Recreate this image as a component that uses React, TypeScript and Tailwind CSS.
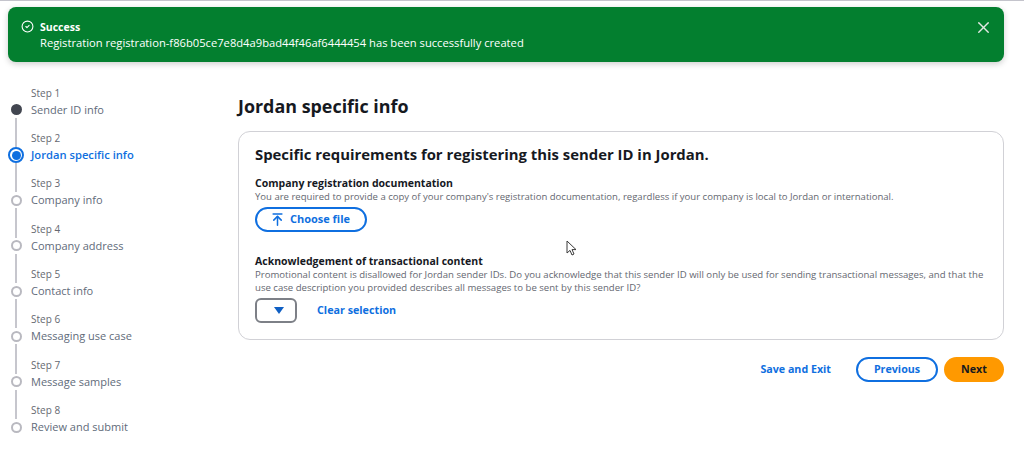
import { ArrowUpToLine, CheckCircle2, X } from "lucide-react";

const steps = [
  "Sender ID info",
  "Jordan specific info",
  "Company info",
  "Company address",
  "Contact info",
  "Messaging use case",
  "Message samples",
  "Review and submit",
];

function StepDot({ index }: { index: number }) {
  if (index === 0) {
    return <span className="h-[11px] w-[11px] rounded-full bg-[#424650]" />;
  }
  if (index === 1) {
    return (
      <span className="flex h-4 w-4 items-center justify-center rounded-full border-2 border-[#0f6fe0] bg-white">
        <span className="h-[9px] w-[9px] rounded-full bg-[#0f6fe0]" />
      </span>
    );
  }
  return <span className="h-[11px] w-[11px] rounded-full border-2 border-[#b9b9c0] bg-white" />;
}

function Wizard() {
  return (
    <nav className="w-[230px] shrink-0 pt-[10.5px]">
      {steps.map((title, i) => (
        <div key={title} className="grid grid-cols-[16px_1fr] gap-x-[7px]">
          <div className="flex h-[29.33px] justify-center">
            {i > 0 && <span className="w-[1.5px] bg-[#c6c6cd]" />}
          </div>
          <div className="flex h-[29.33px] items-end pb-[4px] text-[10px] leading-none text-[#656871]">
            Step {i + 1}
          </div>
          <div className="flex h-4 items-center justify-center">
            <StepDot index={i} />
          </div>
          <div
            className={
              i === 1
                ? "flex h-4 items-center text-[11.2px] font-semibold text-[#0f6fe0]"
                : "flex h-4 items-center text-[11px] text-[#5f6b7a]"
            }
          >
            {title}
          </div>
        </div>
      ))}
    </nav>
  );
}

export default function App() {
  return (
    <div className="relative h-[473px] w-[1024px] overflow-hidden bg-white font-['Open_Sans',sans-serif] text-[#16191f]">
      <div className="h-px bg-[#c4c4cc]" />
      <div className="px-[8px] pr-[20px] pt-[6px]">
        {/* Flash banner */}
        <div className="flex h-[55px] items-start rounded-[8px] bg-[#037f2f] pl-[13px] pr-[11px] pt-[13px] text-white shadow-[0_2px_6px_rgba(0,0,0,0.2)]">
          <CheckCircle2 className="mr-[6px] h-[13px] w-[13px]" strokeWidth={2} />
          <div className="flex-1">
            <div className="text-[10.5px] font-bold leading-[15px]">Success</div>
            <div className="text-[11.2px] leading-[16px]">
              Registration registration-f86b05ce7e8d4a9bad44f46af6444454 has been successfully created
            </div>
          </div>
          <X className="-mt-[2px] h-[19px] w-[19px] text-[#e4e8e4]" strokeWidth={1.7} />
        </div>

        <div className="flex">
          <Wizard />

          <main className="flex-1 pt-[32px]">
            <h1 className="text-[17.9px] font-bold leading-[24px]">Jordan specific info</h1>

            <section className="mt-[13px] h-[209px] rounded-[12px] border border-[#d1d1d6] px-[16px] pt-[11px]">
              <h2 className="text-[14.87px] font-bold leading-[22px]">
                Specific requirements for registering this sender ID in Jordan.
              </h2>

              <div className="mt-[11px] text-[10.5px] font-bold leading-[14px]">Company registration documentation</div>
              <p className="text-[9.55px] leading-[14px] text-[#656871]">
                You are required to provide a copy of your company's registration documentation, regardless if your company is local to Jordan or international.
              </p>
              <button className="mt-[3px] flex h-[25px] w-[112px] items-center justify-center gap-[5px] rounded-full border-2 border-[#0f6fe0] pr-[2px] text-[11px] font-bold text-[#0f6fe0]">
                <ArrowUpToLine className="h-[15px] w-[15px]" strokeWidth={2.4} />
                Choose file
              </button>

              <div className="mt-[22px] text-[10.5px] font-bold leading-[14px]">Acknowledgement of transactional content</div>
              <p className="text-[9.6px] leading-[13px] text-[#656871]">
                Promotional content is disallowed for Jordan sender IDs. Do you acknowledge that this sender ID will only be used for sending transactional messages, and that the use case description you provided describes all messages to be sent by this sender ID?
              </p>
              <div className="mt-[4px] flex items-center">
                <button className="flex h-[25px] w-[42px] items-center justify-center rounded-[6px] border-2 border-[#7d8087] pl-[6px]">
                  <span className="h-0 w-0 border-x-[5px] border-t-[7px] border-x-transparent border-t-[#0f5fc4]" />
                </button>
                <a className="ml-[20px] text-[10.75px] font-bold text-[#0f6fe0]">Clear selection</a>
              </div>
            </section>

            <div className="mt-[17px] flex items-center justify-end text-[10.7px] font-bold">
              <a className="text-[#0f6fe0]">Save and Exit</a>
              <button className="ml-[25px] h-[25px] w-[82px] rounded-full border-2 border-[#0f6fe0] text-[#0f6fe0]">Previous</button>
              <button className="ml-[6px] h-[25px] w-[60px] rounded-full bg-[#ff9900]">Next</button>
            </div>
          </main>
        </div>
      </div>

      {/* Mouse pointer */}
      <svg className="absolute left-[566px] top-[240px]" width="12" height="17" viewBox="0 0 12 17" fill="white" stroke="#3a3a3a" strokeWidth="1">
        <path d="M1 1v12l3-2.6 2 4.6 2-1-2-4.4h4z" />
      </svg>
    </div>
  );
}
